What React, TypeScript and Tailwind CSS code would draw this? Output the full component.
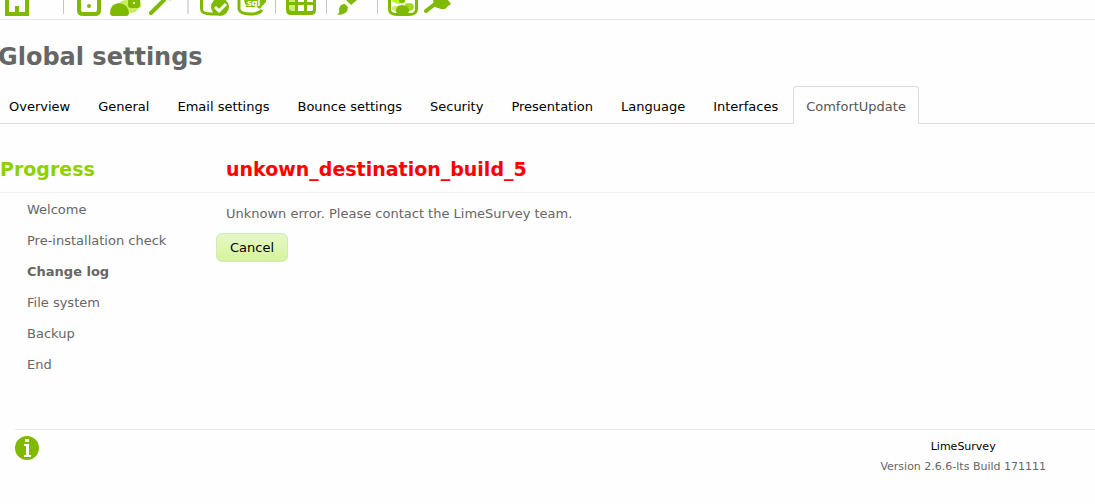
import React from "react";
import clsx from "clsx";

const tabs = [
  "Overview",
  "General",
  "Email settings",
  "Bounce settings",
  "Security",
  "Presentation",
  "Language",
  "Interfaces",
  "ComfortUpdate",
];

const steps = [
  "Welcome",
  "Pre-installation check",
  "Change log",
  "File system",
  "Backup",
  "End",
];

const Separator = () => <div className="h-3.5 w-px bg-[#c4c4c4]" />;

const ToolButton = ({ label, width, children }) => (
  <button type="button" aria-label={label} className="shrink-0">
    <svg
      width={width}
      height={19}
      viewBox={`0 0 ${width} 19`}
      fill="#80ba00"
      className="block"
    >
      {children}
    </svg>
  </button>
);

const Toolbar = () => (
  <div className="flex h-5 items-start overflow-hidden border-b border-[#e9e9e9]">
    <ToolButton label="Home" width={63}>
      <path d="M5 0h4v12h6V6h4v6h6V0h4v16H5z" />
    </ToolButton>
    <Separator />
    <ToolButton label="Global settings" width={42}>
      <path d="M13 0h4v10q0 2 2 2h12q2 0 2-2V0h4v10q0 6-6 6H19q-6 0-6-6z" />
      <circle cx="25" cy="6" r="2" />
    </ToolButton>
    <ToolButton label="Users" width={40}>
      <path d="M14 2l5-2h14q3 2 2 7l-3 2q-2 4-8 4l-6-1z" fill="#c5ee5c" />
      <path d="M4 13q0-9 9-10 9 1 10 10 0 3-3 3H7q-3 0-3-3z" />
      <path d="M22 0h12v5q0 3-3 3h-6q-3 0-3-3z" />
      <path d="M27 2h2v2h-2z" fill="#e4f7ae" />
    </ToolButton>
    <ToolButton label="Check data integrity" width={41}>
      <path
        d="M5 13L18 0"
        stroke="#80ba00"
        strokeWidth="4"
        strokeLinecap="round"
      />
      <path d="M23 0h2v1h-2z" fill="#d9f29a" />
    </ToolButton>
    <div className="h-3.5 w-0.5 bg-[#dcdcdc]" />
    <ToolButton label="Database check" width={45}>
      <path
        d="M12.500 0v9q0 5 10 5h6"
        fill="none"
        stroke="#80ba00"
        strokeWidth="3"
      />
      <circle cx="31" cy="7" r="9" />
      <path
        d="M26 7l4 4 7-7"
        fill="none"
        stroke="#fff"
        strokeWidth="3"
      />
    </ToolButton>
    <ToolButton label="Database backup" width={41}>
      <path
        d="M5 0v9q1 5 11 5 9 0 12-4"
        fill="none"
        stroke="#80ba00"
        strokeWidth="3"
      />
      <path d="M10 0h22v2l-4 4-2 3-3-2H12z" />
      <text
        x="10"
        y="6"
        fontSize="8"
        fill="#fff"
        className="font-['DejaVu_Sans'] font-bold"
      >
        .sql
      </text>
    </ToolButton>
    <Separator />
    <ToolButton label="Label sets" width={50}>
      <path d="M10 0h30v10q0 5-5 5H15q-5 0-5-5z" />
      <path d="M13 0h6v2h-6zM13 5h6v6h-4l-2-2z" fill="#c8ef73" />
      <path
        d="M22 0h6v2h-6zM31 0h6v2h-6zM22 5h6v6h-6zM31 5h6v5l-1 1h-5z"
        fill="#fff"
      />
    </ToolButton>
    <Separator />
    <ToolButton label="Template editor" width={50}>
      <path d="M19 0h11l-6 5z" />
      <path d="M10 15q3-2 2-6 1-5 6-5l3 3q0 8-11 8z" />
    </ToolButton>
    <Separator />
    <ToolButton label="Participants" width={43}>
      <path d="M10 0h30v9q0 7-9 7H19q-9 0-9-7z" />
      <path d="M13 0h24v9q0 4-5 4H18q-5 0-5-4z" fill="#fff" />
      <path d="M14 0h13v3l-6 1-6-2z" fill="#b6f51e" />
      <path d="M14 10V7q2-2 6-1v6z" fill="#c8ef73" />
      <path d="M27 5q0-2 4-2 5 0 5 4t-6 4z" fill="#a2dc18" />
      <path d="M18 11q0-6 6-6 7 0 7 6l-1 3H19z" />
      <circle cx="24" cy="0" r="3" />
    </ToolButton>
    <ToolButton label="Plugins" width={39}>
      <path
        d="M5 11l9-7"
        stroke="#80ba00"
        strokeWidth="4"
        strokeLinecap="round"
      />
      <path d="M12 0h15l3 4-3 2-3 3-4 0-6-2z" />
    </ToolButton>
  </div>
);

const InfoIcon = () => (
  <svg width="24" height="24" viewBox="0 0 24 24" className="block">
    <circle cx="12" cy="12" r="12" fill="#80ba00" />
    <path d="M10 3h4v3h-4zM9 8h5v11h2v2H9v-2h2v-9H9z" fill="#fff" />
  </svg>
);

const App = () => {
  return (
    <div className="min-h-screen overflow-hidden bg-[#fefefe] font-['DejaVu_Sans',Verdana,sans-serif] text-[13px] text-[#666]">
      <Toolbar />

      <h1 className="-ml-0.5 mt-[21px] text-2xl leading-8 font-bold">
        Global settings
      </h1>

      <nav className="-ml-1 mt-[13px] flex border-b border-[#dcdcdc]">
        {tabs.map((tab) => (
          <a
            key={tab}
            href="#"
            className={clsx(
              "mr-0.5 -mb-px shrink-0 rounded-t border px-3 pt-[11px] pb-[7px] leading-[18px]",
              tab === "ComfortUpdate"
                ? "border-[#dcdcdc] border-b-[#fefefe] bg-[#fefefe] text-[#555]"
                : "border-transparent text-black",
            )}
          >
            {tab}
          </a>
        ))}
      </nav>

      <main className="mt-8 flex">
        <aside className="w-[216px] shrink-0">
          <h2 className="border-b border-[#eee] pb-2.5 text-[19px] leading-[26px] font-bold text-[#8fd000]">
            Progress
          </h2>
          <ol className="pt-px pl-[27px]">
            {steps.map((step) => (
              <li
                key={step}
                className={clsx(
                  "leading-[31px]",
                  step === "Change log" && "font-bold",
                )}
              >
                {step}
              </li>
            ))}
          </ol>
        </aside>

        <section className="flex-1">
          <h2 className="border-b border-[#eee] pb-2.5 pl-2.5 text-[19px] leading-[26px] font-bold text-[#f00]">
            unkown_destination_build_5
          </h2>
          <p className="mt-3 pl-2.5 leading-[18px]">
            Unknown error. Please contact the LimeSurvey team.
          </p>
          <button
            type="button"
            className="mt-2.5 h-[29px] rounded-md border border-[#cfe8c0] bg-linear-to-b from-[#e6f8c5] to-[#d6f49b] px-[13px] text-black"
          >
            Cancel
          </button>
        </section>
      </main>

      <footer className="mt-[49px] ml-[15px] flex items-start justify-between border-t border-[#e9e9e9] pt-1.5 pr-[49px] text-[11px]">
        <a href="#" aria-label="Online manual">
          <InfoIcon />
        </a>
        <div className="pt-px text-center leading-5">
          <a href="#" className="block text-black">
            LimeSurvey
          </a>
          <div>Version 2.6.6-lts Build 171111</div>
        </div>
      </footer>
    </div>
  );
};

export default App;
